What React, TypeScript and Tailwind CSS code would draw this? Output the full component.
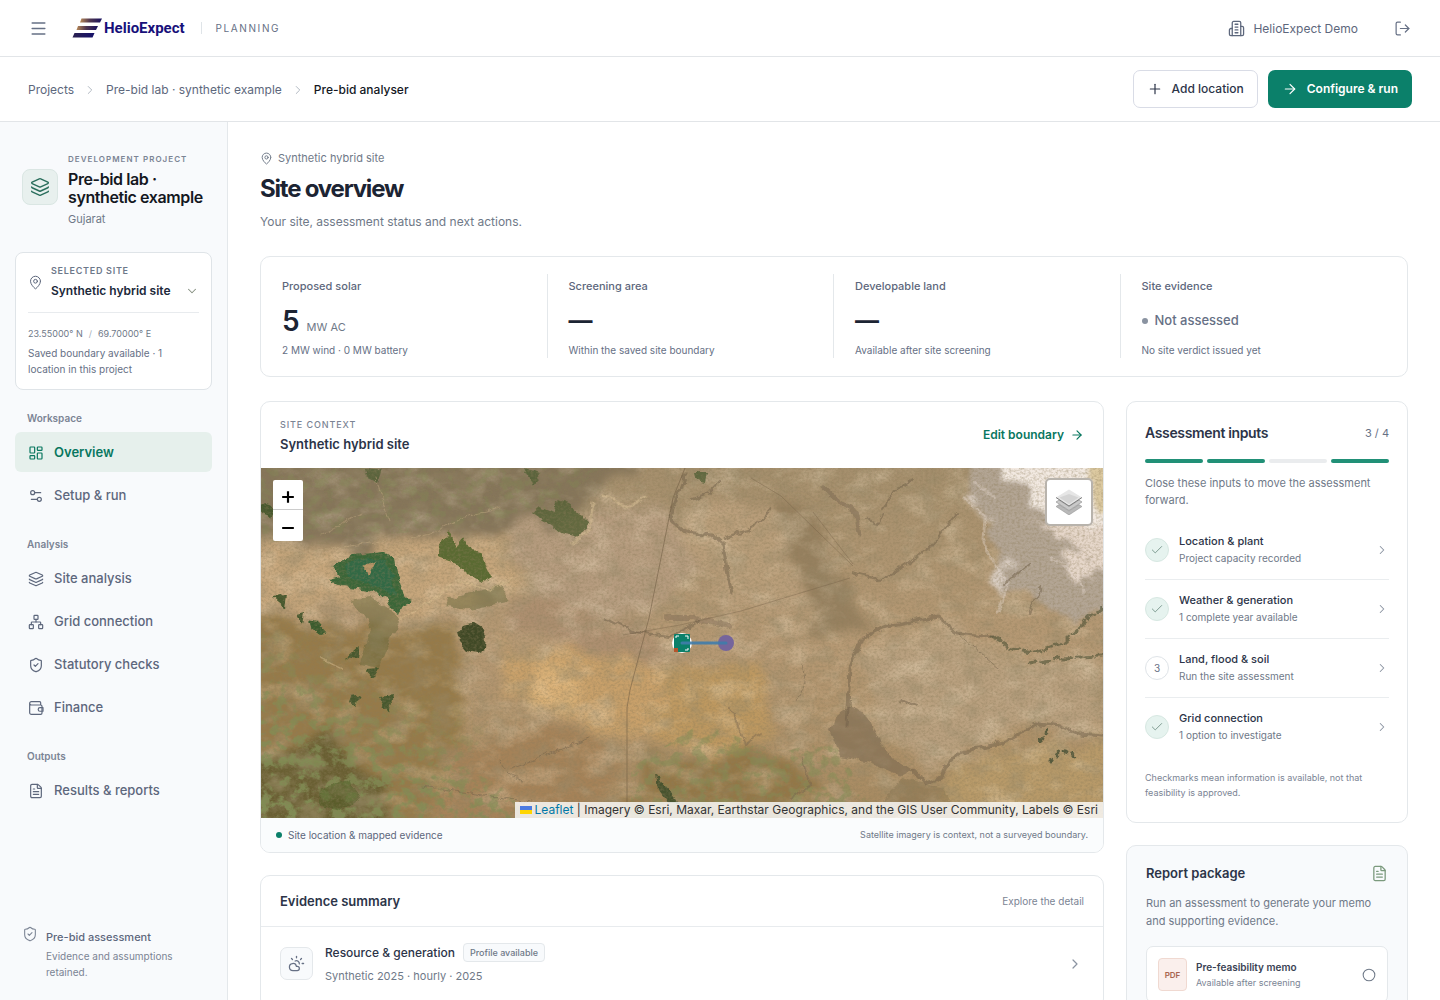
// ============================================================
// HelioExpect — Pre-bid analyser: site overview
// ============================================================
import type { ReactNode } from 'react'
import {
  ArrowRight,
  Check,
  ChevronDown,
  ChevronRight,
  Circle,
  CloudSun,
  FileText,
  Layers,
  LayoutDashboard,
  LogOut,
  MapPin,
  Menu,
  Minus,
  Network,
  Plus,
  Settings2,
  ShieldCheck,
  type LucideIcon,
} from 'lucide-react'

interface IconProps {
  size?: number
  strokeWidth?: number
  className?: string
}

function BuildingIcon({ size = 18, strokeWidth = 1.8, className }: IconProps) {
  return (
    <svg width={size} height={size} viewBox="0 0 24 24" fill="none" stroke="currentColor" strokeWidth={strokeWidth} strokeLinecap="round" strokeLinejoin="round" className={className} aria-hidden="true">
      <path d="M6 22V4a2 2 0 0 1 2-2h8a2 2 0 0 1 2 2v18Z" />
      <path d="M6 12H4a2 2 0 0 0-2 2v6a2 2 0 0 0 2 2h2" />
      <path d="M18 9h2a2 2 0 0 1 2 2v9a2 2 0 0 1-2 2h-2" />
      <path d="M10 6h4M10 10h4M10 14h4M10 18h4" />
    </svg>
  )
}

function WalletIcon({ size = 16, strokeWidth = 1.6, className }: IconProps) {
  return (
    <svg width={size} height={size} viewBox="0 0 24 24" fill="none" stroke="currentColor" strokeWidth={strokeWidth} strokeLinecap="round" strokeLinejoin="round" className={className} aria-hidden="true">
      <path d="M2.5 5v14a2.5 2.5 0 0 0 2.5 2.5h14a2 2 0 0 0 2-2V9.500a2 2 0 0 0-2-2H5A2.500 2.500 0 0 1 5 2.500h12.500a1.500 1.500 0 0 1 1.500 1.500v3.500" />
      <path d="M22.500 11.500H18a2.700 2.700 0 0 0 0 5.400h4.500Z" />
    </svg>
  )
}

function Logo() {
  return (
    <a href="#home" aria-label="HelioExpect" className="flex items-center gap-[2px]">
      <svg width="30" height="22" viewBox="0 0 30 22" aria-hidden="true">
        <defs>
          <linearGradient id="bar" x1="0" y1="0" x2="1" y2="0">
            <stop offset="0" stopColor="#b98a57" />
            <stop offset="0.45" stopColor="#4f3650" />
            <stop offset="1" stopColor="#17105f" />
          </linearGradient>
          <linearGradient id="barDark" x1="0" y1="0" x2="1" y2="0">
            <stop offset="0" stopColor="#2b2150" />
            <stop offset="1" stopColor="#15106a" />
          </linearGradient>
        </defs>
        <path d="M9.500 1.500H30L28 5.500H8Z" fill="url(#bar)" />
        <path d="M6 9H26L24 13H4.500Z" fill="url(#bar)" />
        <path d="M2.500 16H22.500L20.500 20.500H0.500Z" fill="url(#barDark)" />
      </svg>
      <span className="font-['Roboto',sans-serif] text-[15px] leading-6 font-bold text-[#17107a]">HelioExpect</span>
    </a>
  )
}

const NAV: { titulo: string; items: { label: string; icon: LucideIcon | typeof WalletIcon; active?: boolean }[] }[] = [
  {
    titulo: 'Workspace',
    items: [
      { label: 'Overview', icon: LayoutDashboard, active: true },
      { label: 'Setup & run', icon: Settings2 },
    ],
  },
  {
    titulo: 'Analysis',
    items: [
      { label: 'Site analysis', icon: Layers },
      { label: 'Grid connection', icon: Network },
      { label: 'Statutory checks', icon: ShieldCheck },
      { label: 'Finance', icon: WalletIcon },
    ],
  },
  { titulo: 'Outputs', items: [{ label: 'Results & reports', icon: FileText }] },
]

const INPUTS = [
  { title: 'Location & plant', detail: 'Project capacity recorded', done: true },
  { title: 'Weather & generation', detail: '1 complete year available', done: true },
  { title: 'Land, flood & soil', detail: 'Run the site assessment', done: false },
  { title: 'Grid connection', detail: '1 option to investigate', done: true },
]

function TopBar() {
  return (
    <header className="flex h-[57px] shrink-0 items-center border-b border-[#e2e5e8] bg-white px-[29px]">
      <button type="button" aria-label="Open menu" className="text-[#667085]">
        <Menu size={19} strokeWidth={1.8} />
      </button>
      <div className="ml-6 flex items-center">
        <Logo />
        <span className="ml-4 h-3 w-px bg-[#dfe4e8]" />
        <span className="ml-[14px] text-[10px] tracking-[0.16em] text-[#667085]">PLANNING</span>
      </div>
      <div className="ml-auto flex items-center gap-2 pt-px text-xs text-[#5d677c]">
        <BuildingIcon size={17} />
        HelioExpect Demo
      </div>
      <button type="button" aria-label="Sign out" className="ml-9 text-[#667085]">
        <LogOut size={17} strokeWidth={1.7} />
      </button>
    </header>
  )
}

function ActionBar() {
  return (
    <div className="flex h-[65px] shrink-0 items-center justify-between border-b border-[#e2e5e8] bg-white px-7">
      <nav aria-label="Breadcrumb" className="flex items-center gap-[9px] pt-px text-xs text-[#5d677c]">
        <a href="#projects">Projects</a>
        <ChevronRight size={14} strokeWidth={1.5} className="text-[#a7afb9]" />
        <a href="#lab">Pre-bid lab · synthetic example</a>
        <ChevronRight size={14} strokeWidth={1.5} className="text-[#a7afb9]" />
        <span className="font-medium text-[#14181f]">Pre-bid analyser</span>
      </nav>
      <div className="flex gap-[10px]">
        <button type="button" className="flex h-[38px] items-center gap-[9px] rounded-[7px] border border-[#d9dce6] px-[13px] text-xs font-medium text-[#2c3448]">
          <Plus size={16} strokeWidth={1.8} />
          Add location
        </button>
        <button type="button" className="flex h-[38px] items-center gap-[9px] rounded-[7px] bg-[#0b806a] px-[14px] text-xs font-semibold text-white">
          <ArrowRight size={16} strokeWidth={1.8} />
          Configure &amp; run
        </button>
      </div>
    </div>
  )
}

function Sidebar() {
  return (
    <aside className="flex w-[228px] shrink-0 flex-col border-r border-[#e4e8eb] bg-[#f8fafc] px-[15px] pt-[31px] pb-5">
      <div className="flex items-center gap-[10px] pl-[7px]">
        <span className="mb-[6px] flex size-9 shrink-0 items-center justify-center rounded-[8px] border border-[#dae6e3] bg-[#e8f0ee] text-[#2a6e5c]">
          <Layers size={20} strokeWidth={1.7} />
        </span>
        <div>
          <p className="text-[8px] leading-3 font-semibold tracking-[0.13em] text-[#7b8494]">DEVELOPMENT PROJECT</p>
          <p className="mt-[5px] text-base leading-[18px] font-semibold tracking-tight text-[#14181f]">Pre-bid lab · synthetic example</p>
          <p className="mt-[5px] text-[11px] leading-4 text-[#6f7988]">Gujarat</p>
        </div>
      </div>

      {/* Selected site */}
      <div className="mt-[25px] rounded-[8px] border border-[#dfe4e8] bg-white px-3 pt-3 pb-3">
        <button type="button" className="flex w-full items-center gap-2 text-left">
          <MapPin size={15} strokeWidth={1.6} className="shrink-0 text-[#5d677c]" />
          <span className="flex-1">
            <span className="block text-[9px] leading-3 font-semibold tracking-[0.08em] text-[#6d788a]">SELECTED SITE</span>
            <span className="mt-[6px] block text-xs leading-4 font-semibold text-[#20283a]">Synthetic hybrid site</span>
          </span>
          <ChevronDown size={14} strokeWidth={1.8} className="mt-[18px] shrink-0 text-[#858f80]" />
        </button>
        <div className="mt-[13px] border-t border-[#e8ebee] pt-[15px]">
          <p className="flex gap-[6px] text-[9px] leading-3 text-[#6f7988]">
            <span>23.55000° N</span>
            <span className="text-[#a7afb9]">/</span>
            <span>69.70000° E</span>
          </p>
          <p className="mt-[5px] text-[10px] leading-4 text-[#667085]">Saved boundary available · 1 location in this project</p>
        </div>
      </div>

      <nav aria-label="Analyser" className="mt-[19px] flex flex-col gap-5">
        {NAV.map((group) => (
          <div key={group.titulo}>
            <p className="mb-[5px] pl-3 text-[10px] leading-[18px] font-semibold text-[#7b8494]">{group.titulo}</p>
            <div className="flex flex-col gap-[3px]">
              {group.items.map(({ label, icon: Icon, active }) => (
                <a
                  key={label}
                  href="#section"
                  aria-current={active ? 'page' : undefined}
                  className={
                    active
                      ? 'flex h-10 items-center gap-[10px] rounded-[6px] bg-[#e6f0ec] px-[13px] pt-px text-[13px] font-semibold text-[#08775f]'
                      : 'flex h-10 items-center gap-[10px] rounded-[6px] px-[13px] pt-px text-[13px] font-medium text-[#5d677c]'
                  }
                >
                  <Icon size={16} strokeWidth={1.8} />
                  {label}
                </a>
              ))}
            </div>
          </div>
        ))}
      </nav>

      <div className="mt-auto flex gap-2 pl-[7px]">
        <ShieldCheck size={16} strokeWidth={1.6} className="shrink-0 text-[#7b8494]" />
        <div className="pt-[3px]">
          <p className="text-[11px] leading-4 font-medium text-[#5d677c]">Pre-bid assessment</p>
          <p className="mt-[3px] text-[10px] leading-4 text-[#7b8494]">Evidence and assumptions retained.</p>
        </div>
      </div>
    </aside>
  )
}

function Stat({ label, note, children }: { label: string; note: string; children: ReactNode }) {
  return (
    <div className="border-r border-[#e4e8eb] pt-1 pl-[21px] last:border-r-0">
      <p className="text-[11px] leading-4 font-medium text-[#5d677c]">{label}</p>
      <div className="mt-[9px] flex h-9 items-center">{children}</div>
      <p className="mt-[3px] text-[10px] leading-4 text-[#667085]">{note}</p>
    </div>
  )
}

function Stats() {
  return (
    <section className="mt-[25px] grid grid-cols-4 rounded-[10px] border border-[#e4e8eb] pt-[17px] pb-[18px]">
      <Stat label="Proposed solar" note="2 MW wind · 0 MW battery">
        <p className="flex items-baseline gap-[7px]">
          <span className="text-[28px] leading-9 font-semibold text-[#1c2433]">5</span>
          <span className="text-[11px] text-[#6f7988]">MW AC</span>
        </p>
      </Stat>
      <Stat label="Screening area" note="Within the saved site boundary">
        <span className="text-2xl leading-9 font-bold text-[#1c2433]">—</span>
      </Stat>
      <Stat label="Developable land" note="Available after site screening">
        <span className="text-2xl leading-9 font-bold text-[#1c2433]">—</span>
      </Stat>
      <Stat label="Site evidence" note="No site verdict issued yet">
        <p className="flex items-center gap-[7px] text-[13px] font-medium text-[#667085]">
          <span className="size-[6px] rounded-full bg-[#8a93a1]" />
          Not assessed
        </p>
      </Stat>
    </section>
  )
}

// Satellite scene: soft terrain washes, water bodies, drainage lines and roads
function SatelliteImagery() {
  return (
    <svg viewBox="0 0 842 350" preserveAspectRatio="xMidYMid slice" className="size-full" role="img" aria-label="Satellite imagery of the site">
      <defs>
        <filter id="soft" x="-30%" y="-30%" width="160%" height="160%">
          <feTurbulence type="fractalNoise" baseFrequency="0.025" numOctaves="4" seed="8" />
          <feDisplacementMap in="SourceGraphic" scale="50" xChannelSelector="R" yChannelSelector="G" result="d" />
          <feGaussianBlur in="d" stdDeviation="5" />
        </filter>
        <filter id="wisp" x="-30%" y="-30%" width="160%" height="160%">
          <feTurbulence type="fractalNoise" baseFrequency="0.04" numOctaves="5" seed="31" />
          <feDisplacementMap in="SourceGraphic" scale="44" xChannelSelector="R" yChannelSelector="G" result="d" />
          <feGaussianBlur in="d" stdDeviation="2" />
        </filter>
        <filter id="rough" x="-20%" y="-20%" width="140%" height="140%">
          <feTurbulence type="fractalNoise" baseFrequency="0.09" numOctaves="4" seed="3" />
          <feDisplacementMap in="SourceGraphic" scale="8" xChannelSelector="R" yChannelSelector="G" result="d" />
          <feGaussianBlur in="d" stdDeviation="0.7" />
        </filter>
        <filter id="grain" x="0" y="0" width="100%" height="100%">
          <feTurbulence type="fractalNoise" baseFrequency="0.37 0.43" numOctaves="3" seed="11" />
          <feColorMatrix values="0 0 0 0 0.26  0 0 0 0 0.2  0 0 0 0 0.1  1.6 0 0 0 -0.62" />
        </filter>
        <filter id="mottle" x="0" y="0" width="100%" height="100%">
          <feTurbulence type="fractalNoise" baseFrequency="0.047 0.061" numOctaves="6" seed="41" />
          <feColorMatrix values="0 0 0 0 0.32  0 0 0 0 0.26  0 0 0 0 0.15  2.8 0 0 0 -1.3" />
        </filter>
        <filter id="light" x="0" y="0" width="100%" height="100%">
          <feTurbulence type="fractalNoise" baseFrequency="0.031 0.047" numOctaves="6" seed="21" />
          <feColorMatrix values="0 0 0 0 0.93  0 0 0 0 0.8  0 0 0 0 0.6  0 2.6 0 0 -1.2" />
        </filter>
        <filter id="scrub" x="0" y="0" width="100%" height="100%">
          <feTurbulence type="fractalNoise" baseFrequency="0.083 0.097" numOctaves="6" seed="17" result="n" />
          <feColorMatrix in="n" values="0 0 0 0 0.22  0 0 0 0 0.27  0 0 0 0 0.09  0 6 0 0 -2.9" result="c" />
          <feComposite in="c" in2="SourceGraphic" operator="in" />
        </filter>
        <linearGradient id="fade" x1="0" y1="1" x2="0.6" y2="0.2">
          <stop offset="0" stopColor="#000" />
          <stop offset="0.5" stopColor="#000" stopOpacity="0.7" />
          <stop offset="0.85" stopColor="#000" stopOpacity="0" />
        </linearGradient>
        <linearGradient id="base" x1="0" y1="0" x2="0" y2="1">
          <stop offset="0" stopColor="#a58f6d" />
          <stop offset="0.5" stopColor="#b69974" />
          <stop offset="1" stopColor="#a68960" />
        </linearGradient>
      </defs>
      <rect width="842" height="350" fill="url(#base)" />
      <g filter="url(#soft)">
        <path d="M-20-20H390L350 20 290 60 250 80 180 68 90 78-20 70Z" fill="#85755a" />
        <path d="M-20 78L60 84 180 70 262 60 250 120 190 140 150 150 120 140 80 135 40 140-20 150Z" fill="#c6a67b" />
        <path d="M250 60L330 50 400 30 430 100 400 150 340 150 270 130Z" fill="#b69c7f" />
        <path d="M255 120L380 165 420 190 350 200 250 150Z" fill="#ad8f70" />
        <path d="M-20 150L100 160 190 160 210 250 170 360-20 360Z" fill="#967a49" />
        <path d="M-20 290L70 270 130 320 130 370-20 370Z" fill="#695f30" />
        <path d="M240 170L330 180 420 210 430 260 330 260 240 230Z" fill="#c8a06b" />
        <path d="M270 195L312 200 310 240 270 240Z" fill="#d9b077" />
        <path d="M400 200L500 195 510 260 470 290 400 270Z" fill="#bd9860" />
        <path d="M170 280L330 260 360 340 180 370Z" fill="#a58258" />
        <path d="M380 290L500 280 560 310 550 360 370 360Z" fill="#937747" />
        <path d="M590 180L690 155 770 195 842 190 842 250 740 270 660 300 620 240Z" fill="#b9a07f" />
        <path d="M700 290L850 270V360H660Z" fill="#b89a69" />
        <path d="M430 40L500 30 540 100 550 140 470 140 415 70Z" fill="#b99e7a" />
        <path d="M500 20L550 30 570 90 610 160 580 175 550 170 545 110Z" fill="#96805f" />
      </g>
      <rect width="842" height="350" filter="url(#light)" opacity="0.3" />
      <rect width="842" height="350" filter="url(#mottle)" opacity="0.42" />
      <g filter="url(#wisp)">
        <path d="M705-10H860V150L800 146 760 128 735 96 722 40Z" fill="#b3a594" />
        <path d="M735-20H870V30L842 60 815 66 790 44 765 24 745 6Z" fill="#f2e9e1" />
        <path d="M770 50L800 58 830 50 870 56V132L842 104 820 112 800 88 815 80Z" fill="#e6d7ca" />
        <path d="M700 28L722 20 716 40 732 66 722 60ZM736 100L750 96 746 116 738 130Z" fill="#d8ccc1" />
        <path d="M828-10H860V40H836Z" fill="#dcc9a0" />
      </g>
      <g filter="url(#rough)" fill="none" stroke="#e3d8ce" strokeOpacity="0.4" strokeWidth="3">
        <path d="M702 30L724 50 722 72 734 96 748 116 736 146" />
        <path d="M712 14L735 30M790 90L806 100 824 124" />
      </g>
      <path d="M0 350V150L150 150 205 190 270 170 205 300 300 350Z" fill="url(#fade)" filter="url(#scrub)" />
      <path d="M370 350V300L440 255 520 285 570 270 620 350Z" filter="url(#scrub)" opacity="0.5" />
      <path d="M0 0H340L290 40 200 60 60 72 0 74Z" filter="url(#scrub)" opacity="0.3" />
      <g filter="url(#rough)">
        <path d="M70 97L92 87 122 84 134 92 137 109 142 128 151 132 142 136 138 146 129 139 126 129 112 124 96 121 80 119 68 112 79 109Z" fill="#3b6638" />
        <path d="M84 98L100 90 124 92 132 108 134 126 112 118 90 110Z" fill="#2f6a47" fillOpacity="0.8" />
        <path d="M102 100L114 94 110 103 106 107Z" fill="#b99667" />
        <path d="M177 80L189 64 195 80 203 70 210 82 219 84 231 109 222 114 206 105 189 92 177 88Z" fill="#5a6b31" />
        <path d="M271 45L279 38 294 44 296 32 306 35 318 45 328 55 317 69 302 65 286 55Z" fill="#566136" fillOpacity="0.85" />
        <path d="M196 164L202 157 212 155 220 160 225 170 224 180 216 184 206 182 199 174Z" fill="#414a26" />
        <path d="M48 152L58 154 67 164 60 166 50 159Z" fill="#3a5c2d" />
        <path d="M84 190L98 178 97 192ZM104 201L118 200 112 210ZM90 228L100 226 96 240 88 234ZM118 230L132 228 128 246ZM12 130L26 126 24 140ZM36 146L44 144 42 156ZM0 36L14 40 10 50 0 46Z" fill="#46592d" />
        <path d="M185 130L240 118 250 134 210 142 188 138ZM90 132L110 128 140 150 130 170 118 200 100 196 110 160Z" fill="#5d6236" fillOpacity="0.45" />
        <path d="M396 306L404 318 414 330 420 336H408L398 322Z" fill="#46522f" />
        <path d="M60 320L90 312 100 330 80 342 58 336Z" fill="#4a5a25" fillOpacity="0.5" />
        <path d="M104 0L122 2 118 14 106 10ZM264 0L280 6 272 16ZM434 4L446 4 444 14 436 12Z" fill="#4f5e34" fillOpacity="0.8" />
        <path d="M569 262L574 248 589 239 606 246 616 268 628 288 652 302 640 308 612 296 580 288Z" fill="#6f604a" fillOpacity="0.5" />
        <path d="M640 310L680 320 700 350H610Z" fill="#6c6140" fillOpacity="0.3" />
      </g>
      <g filter="url(#rough)" fill="none" strokeLinecap="round">
        <g stroke="#6e5d48" strokeOpacity="0.5">
          <path d="M424 6L416 30 409 52 424 64 452 67 462 76 466 102 471 125" strokeWidth="3" />
          <path d="M462 70L490 62 510 40M430 32L448 26 458 14" strokeWidth="2" />
          <path d="M345 150L372 164 410 168 440 152" strokeWidth="2" />
          <path d="M405 150L430 150 470 158" strokeWidth="6" strokeOpacity="0.35" />
          <path d="M562 18L578 34 594 44 598 66" strokeWidth="5" strokeOpacity="0.4" />
          <path d="M622 40L636 20 650 12M606 52L618 55 622 46" strokeWidth="2" />
          <path d="M592 105L620 112 642 99 669 79 684 60 696 45" strokeWidth="2" />
          <path d="M586 260L589 200 602 169 626 159 676 149 696 165 732 169" strokeWidth="3" />
          <path d="M698 166L720 185 738 200M540 196L544 215 536 232" strokeWidth="1" />
          <path d="M652 302L664 316 680 310 688 294 700 284 742 275 762 263 779 255 800 258 818 266 842 268" strokeWidth="3" />
          <path d="M238 292L246 306 260 312M160 318L270 334M250 300L330 270" strokeWidth="1" />
          <path d="M470 240L485 276 500 266M540 290L550 318 530 330" strokeWidth="2" strokeOpacity="0.4" />
          <path d="M780 120L768 145M640 232L655 238M768 96L742 118" strokeWidth="2" />
        </g>
        <path d="M732 169L750 180 769 185 802 175 822 156 842 140M770 196L800 190 842 188" stroke="#4e5338" strokeOpacity="0.65" strokeWidth="3" strokeDasharray="7 4" />
        <path d="M780 272L788 262M790 292L800 284 814 288" stroke="#565a3e" strokeWidth="3" strokeDasharray="3 5" />
        <path d="M115 10L128 52M150 70L170 66 200 50 240 40M28 86L90 78 128 72M60 66L100 46" stroke="#c3ac84" strokeOpacity="0.5" strokeWidth="1" />
        <path d="M196 112L230 122 250 110M142 150L160 140 190 118M60 190L80 200" stroke="#d8bd90" strokeOpacity="0.5" strokeWidth="2" />
        <path d="M332 36L328 60 312 76M342 28L366 38 384 30" stroke="#d4ba92" strokeOpacity="0.6" strokeWidth="3" />
      </g>
      <g fill="none" stroke="#6b573f" strokeOpacity="0.55">
        <path d="M424 0L412 30 400 90 388 150 369 222 366 240V350" />
        <path d="M362 167L419 157 480 143 589 110M490 10L520 28 592 98M552 44L592 96" strokeOpacity="0.35" />
      </g>
      <rect width="842" height="350" filter="url(#grain)" opacity="0.55" />

      {/* Site marker, connection line and substation */}
      <circle cx="421" cy="175" r="10" fill="#fff" />
      <rect x="413" y="166" width="16" height="18" rx="1" fill="#0b806a" />
      <path d="M415 170v-2h3M424 168h3v3M427 180v2h-3" fill="none" stroke="#fff" />
      <rect x="413" y="180" width="4" height="4" fill="#b4552c" />
      <circle cx="465" cy="175" r="8" fill="#75659c" />
      <path d="M421 175H465" stroke="#3f7cab" strokeWidth="3" strokeOpacity="0.9" strokeLinecap="round" />
    </svg>
  )
}

function LeafletLayersIcon() {
  return (
    <svg width="26" height="26" viewBox="0 0 26 26" aria-hidden="true">
      <path d="M0 17.500L13 26 26 17.500 23 15.600 13 22 3 15.600Z" fill="#b9b9b9" stroke="#8c8c8c" strokeWidth="0.500" />
      <path d="M0 13L13 21.500 26 13 23 11 13 17.500 3 11Z" fill="#c9c9c9" stroke="#7d7d7d" strokeWidth="0.500" />
      <path d="M0 8.500L13 0.500 26 8.500 13 17Z" fill="#e6e6e6" />
      <path d="M3.500 8.500L13 5 22.500 8.500 13 15Z" fill="#d4d4d4" />
      <path d="M0 8.500L13 17 26 8.500" fill="none" stroke="#6d6d6d" strokeWidth="0.900" />
    </svg>
  )
}

function SiteMap() {
  return (
    <div className="relative h-[350px] overflow-hidden bg-[#a58f6d]">
      <SatelliteImagery />
      <div className="absolute top-3 left-3 flex w-[30px] flex-col overflow-hidden rounded-[2px] bg-white text-black">
        <button type="button" aria-label="Zoom in" className="flex h-[30px] items-center justify-center border-b border-[#ccc] pt-1">
          <Plus size={20} strokeWidth={2.6} strokeLinecap="butt" />
        </button>
        <button type="button" aria-label="Zoom out" className="flex h-[31px] items-center justify-center pt-1">
          <Minus size={20} strokeWidth={2.6} strokeLinecap="butt" />
        </button>
      </div>
      <button type="button" aria-label="Layers" className="absolute top-[10px] right-[10px] flex size-12 items-center justify-center rounded-[5px] border-2 border-[#b8b3ac] bg-white">
        <LeafletLayersIcon />
      </button>
      <div className="absolute right-0 bottom-0 flex items-center bg-white/80 px-[5px] text-xs leading-4 text-[#333]">
        <svg width="12" height="8" viewBox="0 0 12 8" className="mr-[3px]" aria-hidden="true">
          <path fill="#4c7be1" d="M0 0h12v4H0z" />
          <path fill="#ffd500" d="M0 4h12v4H0z" />
        </svg>
        <a href="#leaflet" className="text-[#0078a8]">Leaflet</a>
        <span className="whitespace-pre"> | Imagery © Esri, Maxar, Earthstar Geographics, and the GIS User Community, Labels © Esri</span>
      </div>
    </div>
  )
}

function SiteContextCard() {
  return (
    <section className="overflow-hidden rounded-[10px] border border-[#e4e8eb] bg-white">
      <div className="flex h-[66px] items-center justify-between px-[19px]">
        <div>
          <p className="text-[9px] leading-[14px] font-medium tracking-[0.1em] text-[#7b8494]">SITE CONTEXT</p>
          <h2 className="mt-[3px] text-[13px] leading-[18px] font-semibold text-[#2c3448]">Synthetic hybrid site</h2>
        </div>
        <a href="#boundary" className="flex items-center gap-[6px] text-xs font-semibold text-[#08775f]">
          Edit boundary
          <ArrowRight size={14} strokeWidth={2} />
        </a>
      </div>
      <SiteMap />
      <div className="flex h-[34px] items-center justify-between bg-[#fafcfd] px-[15px] text-[#5d677c]">
        <p className="flex items-center gap-[6px] text-[10px]">
          <span className="size-[6px] rounded-full bg-[#0b806a]" />
          Site location &amp; mapped evidence
        </p>
        <p className="text-[9px] text-[#6f7988]">Satellite imagery is context, not a surveyed boundary.</p>
      </div>
    </section>
  )
}

function EvidenceCard() {
  return (
    <section className="rounded-[10px] border border-[#e4e8eb] bg-white">
      <div className="flex h-[51px] items-center justify-between border-b border-[#e8ebee] px-[19px]">
        <h2 className="pt-px text-[13px] font-semibold text-[#2c3448]">Evidence summary</h2>
        <span className="text-[10px] text-[#7b8494]">Explore the detail</span>
      </div>
      <a href="#resource" className="flex items-center gap-3 px-[19px] pt-4 pb-6">
        <span className="flex size-[33px] items-center justify-center rounded-[7px] border border-[#e4e8eb] bg-[#f8fafc] text-[#667085]">
          <CloudSun size={17} strokeWidth={1.8} />
        </span>
        <span className="flex-1">
          <span className="flex items-center gap-2">
            <span className="text-xs font-medium text-[#2c3448]">Resource &amp; generation</span>
            <span className="rounded-[4px] border border-[#e4e8eb] bg-[#f8fafc] px-[6px] text-[9px] leading-[17px] font-medium text-[#6f7988]">Profile available</span>
          </span>
          <span className="mt-[6px] block text-[11px] leading-4 text-[#6f7988]">Synthetic 2025 · hourly · 2025</span>
        </span>
        <ChevronRight size={16} strokeWidth={1.8} className="mr-px text-[#8a93a1]" />
      </a>
    </section>
  )
}

function InputsCard() {
  return (
    <section className="rounded-[10px] border border-[#e4e8eb] bg-white px-[18px] pt-[22px] pb-[22px]">
      <div className="flex items-center justify-between">
        <h2 className="text-sm leading-[18px] font-semibold tracking-tight text-[#2c3448]">Assessment inputs</h2>
        <span className="text-[11px] leading-[18px] text-[#667085]">3 / 4</span>
      </div>
      <div className="mt-[17px] grid grid-cols-4 gap-1">
        {INPUTS.map((input) => (
          <span key={input.title} className={input.done ? 'h-1 rounded-full bg-[#219077]' : 'h-1 rounded-full bg-[#eaecee]'} />
        ))}
      </div>
      <p className="mt-3 text-[11px] leading-[17px] text-[#6f7988]">Close these inputs to move the assessment forward.</p>
      <ul className="mt-3 divide-y divide-[#eaedef]">
        {INPUTS.map((input, i) => (
          <li key={input.title}>
            <a href="#input" className="flex h-[58px] items-center gap-[10px]">
              {input.done ? (
                <span className="flex size-6 items-center justify-center rounded-full border border-[#d7e8e2] bg-[#e6f3ef] text-[#7e9c92]">
                  <Check size={14} strokeWidth={1.7} />
                </span>
              ) : (
                <span className="flex size-6 items-center justify-center rounded-full border border-[#dfe4e8] text-[10px] text-[#667085]">{i + 1}</span>
              )}
              <span className="flex-1 pb-[2px]">
                <span className="block text-[11px] leading-4 font-medium text-[#2c3448]">{input.title}</span>
                <span className="mt-px block text-[10px] leading-4 text-[#6f7988]">{input.detail}</span>
              </span>
              <ChevronRight size={14} strokeWidth={1.8} className="text-[#8a93a1]" />
            </a>
          </li>
        ))}
      </ul>
      <p className="mt-[14px] text-[9px] leading-[15px] text-[#7b8494]">Checkmarks mean information is available, not that feasibility is approved.</p>
    </section>
  )
}

function ReportCard() {
  return (
    <section className="rounded-[10px] border border-[#e4e8eb] bg-[#f8fafc] px-[19px] pt-[18px] pb-5">
      <div className="flex items-center justify-between">
        <h2 className="text-[13px] leading-[18px] font-semibold text-[#2c3448]">Report package</h2>
        <FileText size={17} strokeWidth={1.8} className="text-[#7b9a7d]" />
      </div>
      <p className="mt-3 text-[11px] leading-[18px] text-[#6f7988]">Run an assessment to generate your memo and supporting evidence.</p>
      <div className="mt-4 flex items-center gap-[9px] rounded-[7px] border border-[#e4e8eb] bg-white px-[11px] py-[11px]">
        <span className="flex h-[33px] w-[29px] items-center justify-center rounded-[4px] border border-[#f0d9d1] bg-[#faefec] text-[8px] font-semibold text-[#a8644f]">PDF</span>
        <span className="flex-1">
          <span className="block text-[10px] leading-4 font-semibold text-[#3a4254]">Pre-feasibility memo</span>
          <span className="block text-[9px] leading-4 text-[#7b8494]">Available after screening</span>
        </span>
        <Circle size={14} strokeWidth={1.8} className="text-[#6f7988]" />
      </div>
    </section>
  )
}

export default function App() {
  return (
    <div className="flex h-screen flex-col overflow-hidden bg-white font-['Inter',sans-serif]">
      <TopBar />
      <ActionBar />
      <div className="flex min-h-0 flex-1">
        <Sidebar />
        <main className="min-w-0 flex-1 overflow-y-auto px-8 pt-7 pb-8 [scrollbar-width:none]">
          <p className="flex items-center gap-[5px] text-[11px] leading-4 text-[#6f7988]">
            <MapPin size={13} strokeWidth={1.8} />
            Synthetic hybrid site
          </p>
          <h1 className="mt-[7px] text-2xl leading-8 font-bold tracking-tighter text-[#1c2433]">Site overview</h1>
          <p className="mt-2 text-xs leading-[18px] text-[#6f7988]">Your site, assessment status and next actions.</p>
          <Stats />
          <div className="mt-6 grid grid-cols-[minmax(0,1fr)_282px] items-start gap-[22px]">
            <div className="flex flex-col gap-[22px]">
              <SiteContextCard />
              <EvidenceCard />
            </div>
            <div className="flex flex-col gap-[22px]">
              <InputsCard />
              <ReportCard />
            </div>
          </div>
        </main>
      </div>
    </div>
  )
}
